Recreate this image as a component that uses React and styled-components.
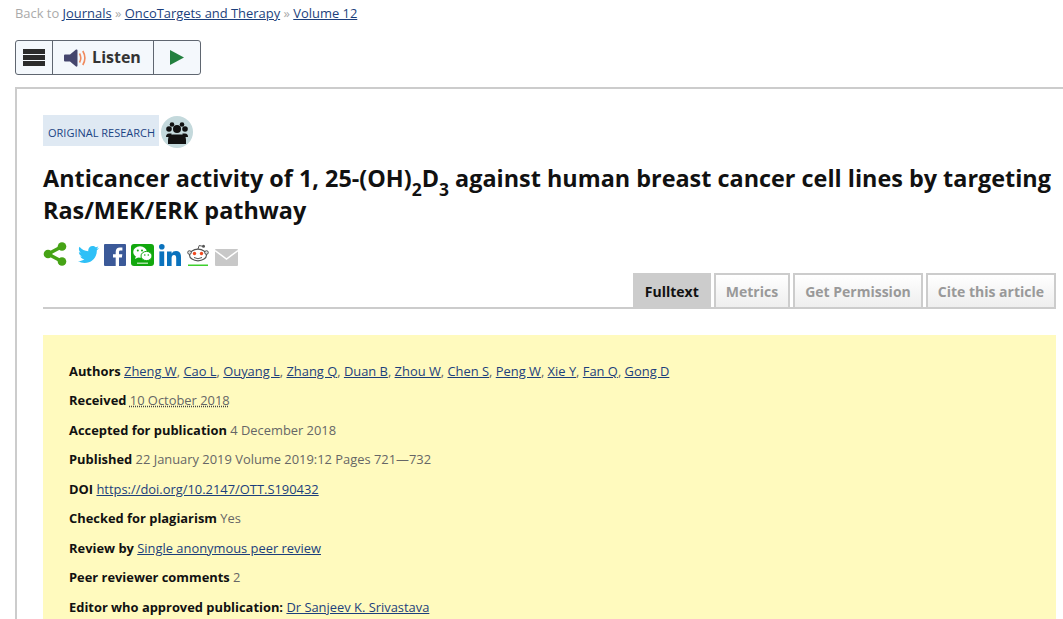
import styled, { createGlobalStyle } from "styled-components";
import { FaTwitter } from "react-icons/fa";

const GlobalStyle = createGlobalStyle`
  html, body {
    margin: 0;
    padding: 0;
    height: 619px;
    overflow: hidden;
    background: #fff;
  }
  body {
    font-family: "Open Sans", "Liberation Sans", sans-serif;
    font-size: 13px;
    color: #666;
  }
`;

const AUTHORS = ["Zheng W", "Cao L", "Ouyang L", "Zhang Q", "Duan B", "Zhou W", "Chen S", "Peng W", "Xie Y", "Fan Q", "Gong D"];

const App = () => {
  return (
    <Page>
      <GlobalStyle />
      <Breadcrumb>
        Back to <a href="#j">Journals</a> <Sep>»</Sep> <a href="#o">OncoTargets and Therapy</a> <Sep>»</Sep> <a href="#v">Volume 12</a>
      </Breadcrumb>

      <Player>
        <PlayerButton $width={37}>
          <MenuBars><i /><i /><i /></MenuBars>
        </PlayerButton>
        <PlayerButton $width={101}>
          <svg width="23" height="18" viewBox="0 0 23 18">
            <path d="M0 6.500Q0 5.500 1 5.500H6L12 .5Q13.500 0 13.500 1.500V16.500Q13.500 18 12 17.500L6 12.500H1Q0 12.500 0 11.500z" fill="#45466e" />
            <path d="M15.500 4.500q2.600 4.500 0 9" fill="none" stroke="#f08a5d" strokeWidth="1.600" />
            <path d="M18.800 2q4.200 7 0 14" fill="none" stroke="#f08a5d" strokeWidth="1.600" />
          </svg>
          <ListenLabel>Listen</ListenLabel>
        </PlayerButton>
        <PlayerButton $width={46}>
          <svg width="14" height="15" viewBox="0 0 14 15"><path d="M0 0l14 7.500-14 7.500z" fill="#23803f" /></svg>
        </PlayerButton>
      </Player>

      <Article>
        <TagRow>
          <Tag>ORIGINAL RESEARCH</Tag>
          <ReviewBadge>
            <svg width="32" height="32" viewBox="0 0 32 32">
              <circle cx="16" cy="16" r="16" fill="#c4d9dc" />
              <g fill="#111">
                <circle cx="8" cy="13" r="2.800" />
                <circle cx="24" cy="13" r="2.800" />
                <circle cx="11" cy="8.500" r="2.300" />
                <circle cx="21" cy="8.500" r="2.300" />
                <circle cx="16" cy="13" r="4" />
                <path d="M5 21q0-3.500 3-3.500h2.500V21z" />
                <path d="M27 21q0-3.500-3-3.500h-2.500V21z" />
                <path d="M7 28v-4q0-5.500 5-5.500h8q5 0 5 5.500v4z" />
              </g>
            </svg>
          </ReviewBadge>
        </TagRow>

        <Title>
          Anticancer activity of 1, 25-(OH)<sub>2</sub>D<sub>3</sub> against human breast cancer cell lines by targeting Ras/MEK/ERK pathway
        </Title>

        <ShareRow>
          <ShareIcon $top={0}><ShareGlyph /></ShareIcon>
          <ShareIcon $left={11} $top={2}><FaTwitter size={21} color="#2fc0f7" /></ShareIcon>
          <ShareIcon $left={5} $top={2}><FacebookGlyph /></ShareIcon>
          <ShareIcon $left={5} $top={2}><WeChatGlyph /></ShareIcon>
          <ShareIcon $left={5} $top={2}><LinkedinGlyph /></ShareIcon>
          <ShareIcon $left={6} $top={2}><RedditGlyph /></ShareIcon>
          <ShareIcon $left={6} $top={7}><MailGlyph /></ShareIcon>
        </ShareRow>

        <Tabs>
          <Tab $active>Fulltext</Tab>
          <Tab>Metrics</Tab>
          <Tab>Get Permission</Tab>
          <Tab>Cite this article</Tab>
        </Tabs>

        <InfoBox>
          <InfoRow>
            <b>Authors</b>{" "}
            {AUTHORS.map((a, i) => (
              <span key={a}><a href="#a">{a}</a>{i < AUTHORS.length - 1 ? ", " : ""}</span>
            ))}
          </InfoRow>
          <InfoRow><b>Received</b> <Dotted>10 October 2018</Dotted></InfoRow>
          <InfoRow><b>Accepted for publication</b> 4 December 2018</InfoRow>
          <InfoRow><b>Published</b> 22 January 2019 Volume 2019:12 Pages 721—732</InfoRow>
          <InfoRow><b>DOI</b> <a href="#d">https://doi.org/10.2147/OTT.S190432</a></InfoRow>
          <InfoRow><b>Checked for plagiarism</b> Yes</InfoRow>
          <InfoRow><b>Review by</b> <a href="#r">Single anonymous peer review</a></InfoRow>
          <InfoRow><b>Peer reviewer comments</b> 2</InfoRow>
          <InfoRow><b>Editor who approved publication:</b> <a href="#e">Dr Sanjeev K. Srivastava</a></InfoRow>
        </InfoBox>
      </Article>
    </Page>
  );
};

const ShareGlyph = () => (
  <svg width="24" height="24" viewBox="0 0 24 24">
    <path d="M19 4.500L5 12l14 7.500" fill="none" stroke="#46a316" strokeWidth="3.500" />
    <circle cx="19" cy="4.500" r="4.300" fill="#46a316" />
    <circle cx="5" cy="12" r="4.300" fill="#46a316" />
    <circle cx="19" cy="19.500" r="4.300" fill="#46a316" />
  </svg>
);

const FacebookGlyph = () => (
  <svg width="22" height="22" viewBox="0 0 22 22">
    <rect width="22" height="22" rx="1" fill="#3b5998" />
    <path d="M15 22v-8.500h2.900l.4-3.300H15V8.100c0-1 .3-1.600 1.700-1.600h1.700V3.600c-.4 0-1.400-.1-2.500-.1-2.500 0-4.200 1.500-4.200 4.300v2.400H9v3.300h2.700V22z" fill="#fff" />
  </svg>
);

const WeChatGlyph = () => (
  <svg width="23" height="22" viewBox="0 0 23 22">
    <rect width="23" height="22" rx="3" fill="#12a80e" />
    <ellipse cx="9" cy="8" rx="6.800" ry="5.800" fill="#fff" />
    <path d="M5 12l-1 3 4-2z" fill="#fff" />
    <ellipse cx="15.500" cy="12" rx="5.500" ry="4.600" fill="#fff" stroke="#12a80e" strokeWidth="1" />
    <circle cx="6.800" cy="6.500" r="1" fill="#12a80e" />
    <circle cx="11" cy="6.500" r="1" fill="#12a80e" />
    <circle cx="13.800" cy="11" r=".8" fill="#12a80e" />
    <circle cx="17.300" cy="11" r=".8" fill="#12a80e" />
    <rect x="6" y="18.500" width="11" height="1.500" fill="#a8e0a5" />
  </svg>
);

const LinkedinGlyph = () => (
  <svg width="22" height="22" viewBox="0 0 22 22">
    <g fill="#0a72bd">
      <circle cx="2.800" cy="2.800" r="2.800" />
      <rect x=".4" y="7.400" width="4.800" height="14.600" />
      <path d="M8 7.400h4.600v2q1.300-2.400 4.400-2.400 5 0 5 6V22h-4.800v-7.800c0-1.900-.6-3.100-2.200-3.100-1.800 0-2.400 1.400-2.400 3.100V22H8z" />
    </g>
  </svg>
);

const RedditGlyph = () => (
  <svg width="22" height="22" viewBox="0 0 22 22">
    <ellipse cx="11" cy="11" rx="8.500" ry="5.800" fill="#fff" stroke="#555" strokeWidth="1.200" />
    <circle cx="2.500" cy="8.500" r="1.800" fill="#ddd" stroke="#555" />
    <circle cx="19.500" cy="8.500" r="1.800" fill="#ddd" stroke="#555" />
    <path d="M11 5l1.200-3.500 3.500.8" fill="none" stroke="#555" />
    <circle cx="16.500" cy="2.300" r="1.500" fill="#555" />
    <circle cx="7.500" cy="9.500" r="1.700" fill="#f0481f" />
    <circle cx="14.500" cy="9.500" r="1.700" fill="#f0481f" />
    <path d="M7 13.500q4 2.500 8 0" fill="none" stroke="#555" />
    <rect x="1" y="20.500" width="20" height="1.500" fill="#3fd02e" />
  </svg>
);

const MailGlyph = () => (
  <svg width="23" height="17" viewBox="0 0 23 17">
    <rect width="23" height="17" rx="1" fill="#c8c8c8" />
    <path d="M0 1.500l11.500 8.500L23 1.500" fill="none" stroke="#fff" strokeWidth="1.500" />
  </svg>
);

const Page = styled.div`
  height: 619px;
  overflow: hidden;
  padding: 4px 0 0 15px;
  box-sizing: border-box;

  a {
    color: #1c3f7c;
    text-decoration: underline;
  }
`;

const Breadcrumb = styled.div`
  font-size: 12.930px;
  line-height: 18px;
  color: #aaa;
`;

const Sep = styled.span`
  color: #aaa;
`;

const Player = styled.div`
  display: flex;
  width: fit-content;
  height: 35px;
  margin-top: 18px;
  border: 1px solid #5f6670;
  border-radius: 3px;
  box-sizing: border-box;
  background: #f4f8fc;
`;

const PlayerButton = styled.div`
  display: flex;
  align-items: center;
  justify-content: center;
  gap: 5px;
  box-sizing: border-box;
  width: ${(p) => p.$width}px;
  padding-right: 1px;
  border-right: 1px solid #5f6670;

  &:last-child { border-right: 0; }
`;

const MenuBars = styled.div`
  display: flex;
  flex-direction: column;
  gap: 1px;

  i {
    display: block;
    width: 22px;
    height: 5px;
    background: #2b2b2b;
  }
`;

const ListenLabel = styled.span`
  margin-top: -2px;
  font-size: 16px;
  font-weight: 700;
  color: #333;
`;

const Article = styled.div`
  margin-top: 12px;
  width: 1100px;
  height: 600px;
  box-sizing: border-box;
  border-top: 2px solid #ccc;
  border-left: 2px solid #ccc;
  padding: 26px 0 0 26px;
`;

const TagRow = styled.div`
  display: flex;
  align-items: flex-start;
  gap: 2px;
`;

const Tag = styled.span`
  display: flex;
  align-items: center;
  height: 31px;
  padding: 3px 4px 0 5px;
  box-sizing: border-box;
  font-size: 11px;
  color: #1a4484;
  background: #dfe9f3;
`;

const ReviewBadge = styled.span`
  display: flex;
  width: 32px;
  height: 32px;
  margin-top: 1px;
`;

const Title = styled.h1`
  width: 1020px;
  margin: 14px 0 0;
  font-size: 23.400px;
  line-height: 32px;
  font-weight: 700;
  color: #111;

  sub {
    font-size: 17.500px;
    line-height: 0;
    vertical-align: -9px;
  }
`;

const ShareRow = styled.div`
  display: flex;
  align-items: flex-start;
  height: 31px;
  margin-top: 16px;
`;

const ShareIcon = styled.span`
  display: flex;
  margin-left: ${(p) => p.$left || 0}px;
  margin-top: ${(p) => p.$top || 0}px;
`;

const Tabs = styled.div`
  display: flex;
  justify-content: flex-end;
  align-items: flex-end;
  gap: 3px;
  width: 1013px;
  height: 36px;
  box-sizing: border-box;
  border-bottom: 2px solid #ccc;
`;

const Tab = styled.div`
  display: flex;
  align-items: center;
  justify-content: center;
  height: 34px;
  padding: 1px 10px 0;
  box-sizing: border-box;
  font-size: 14px;
  font-weight: 700;
  color: ${(p) => (p.$active ? "#111" : "#999")};
  background: ${(p) => (p.$active ? "#ccc" : "linear-gradient(#fff, #eee)")};
  border: 2px solid #ccc;
  border-bottom: 0;
`;

const InfoBox = styled.div`
  width: 1013px;
  margin-top: 26px;
  padding: 26.700px 26px;
  box-sizing: border-box;
  background: #fffabe;
`;

const InfoRow = styled.div`
  font-size: 12.900px;
  line-height: 18px;
  margin-bottom: 11.500px;
  color: #666;

  b {
    color: #111;
  }
`;

const Dotted = styled.span`
  text-decoration: underline dotted #444;
`;

export default App;
